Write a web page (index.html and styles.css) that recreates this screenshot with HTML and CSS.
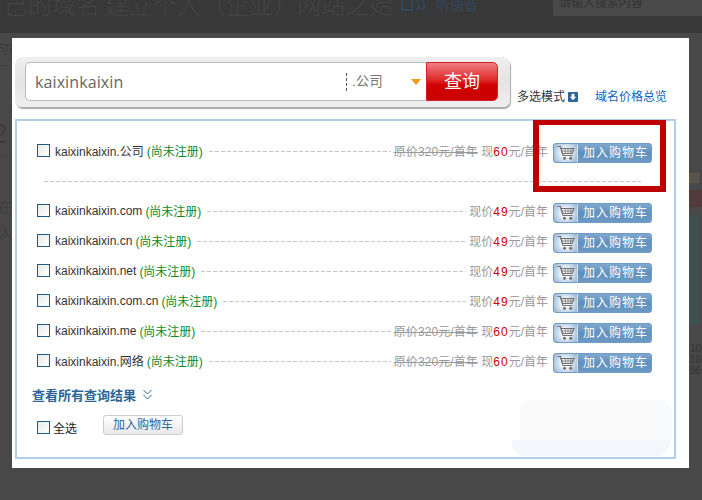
FILE: index.html
```html
<!DOCTYPE html>
<html lang="zh-CN">
<head>
<meta charset="utf-8">
<title>域名查询</title>
<link rel="stylesheet" href="styles.css">
</head>
<body>
<svg class="defs" width="0" height="0" aria-hidden="true">
  <symbol id="cart" viewBox="0 0 18 16">
    <path d="M0.5 1.5H3.5L6 10.5H15.5" fill="none" stroke="currentColor" stroke-width="1.1"/>
    <path d="M4 3.5H17L15 8.5H5.4Z" fill="none" stroke="currentColor" stroke-width="1.1"/>
    <path d="M4.6 6H16M8 3.5 8.5 8.5M11 3.5V8.5M14 3.5 13.5 8.5" fill="none" stroke="currentColor" stroke-width=".8"/>
    <circle cx="7.5" cy="13.3" r="1.5" fill="currentColor"/>
    <circle cx="13.7" cy="13.3" r="1.5" fill="currentColor"/>
  </symbol>
</svg>

<div class="backdrop">
  <div class="bg-band"></div>
  <div class="bg-title">己的域名 建立个人（企业）网站之始</div>
  <svg class="bg-sound" width="28" height="14" viewBox="0 0 28 14"><path d="M1 0v10h10V0M16 0q4 5 0 10M21 0q4 5 0 10" fill="none" stroke="#33475c" stroke-width="2"/></svg>
  <div class="bg-listen">听语音</div>
  <div class="bg-search">请输入搜索内容</div>
  <div class="bg-line bg-line1"></div>
  <div class="bg-line bg-line2"></div>
  <div class="bg-left bg-l1">可能</div>
  <div class="bg-left bg-l2">2</div>
  <div class="bg-left bg-l3">在</div>
  <div class="bg-left bg-l4">入</div>
  <div class="bg-tan"></div>
  <div class="bg-red"></div>
  <div class="bg-teal"></div>
  <div class="bg-num bg-n1">10</div>
  <div class="bg-num bg-n2">10</div>
  <div class="bg-num bg-n3">96</div>
</div>

<div class="modal">
  <div class="top">
    <div class="searchframe">
      <div class="searchinput">
        <span class="query">kaixinkaixin</span>
        <span class="suffix">.公司</span>
        <span class="caret"></span>
      </div>
      <div class="searchbtn">查询</div>
    </div>
    <div class="toplinks">
      <span class="multi">多选模式<span class="downicon"><svg width="10" height="10" viewBox="0 0 11 11"><rect width="11" height="11" rx="1" fill="#2d6599"/><path d="M5.5 9 2 5.3h2V2h3v3.3h2z" fill="#fff"/></svg></span></span>
      <span class="overview">域名价格总览</span>
    </div>
  </div>

  <div class="results">
    <div class="row">
      <div class="info"><span class="check"></span><span class="name">kaixinkaixin.公司</span><span class="status">(尚未注册)</span><span class="leader"></span><span class="price"><s>原价320元/首年</s> 现<b>60</b>元/首年</span></div>
      <div class="cartbtn"><span class="carticon"><svg width="18" height="16"><use href="#cart"/></svg></span><span class="cartlabel">加入购物车</span></div>
    </div>
    <div class="divider"></div>
    <div class="row">
      <div class="info"><span class="check"></span><span class="name">kaixinkaixin.com</span><span class="status">(尚未注册)</span><span class="leader"></span><span class="price">现价<b>49</b>元/首年</span></div>
      <div class="cartbtn"><span class="carticon"><svg width="18" height="16"><use href="#cart"/></svg></span><span class="cartlabel">加入购物车</span></div>
    </div>
    <div class="row">
      <div class="info"><span class="check"></span><span class="name">kaixinkaixin.cn</span><span class="status">(尚未注册)</span><span class="leader"></span><span class="price">现价<b>49</b>元/首年</span></div>
      <div class="cartbtn"><span class="carticon"><svg width="18" height="16"><use href="#cart"/></svg></span><span class="cartlabel">加入购物车</span></div>
    </div>
    <div class="row">
      <div class="info"><span class="check"></span><span class="name">kaixinkaixin.net</span><span class="status">(尚未注册)</span><span class="leader"></span><span class="price">现价<b>49</b>元/首年</span></div>
      <div class="cartbtn"><span class="carticon"><svg width="18" height="16"><use href="#cart"/></svg></span><span class="cartlabel">加入购物车</span></div>
    </div>
    <div class="row">
      <div class="info"><span class="check"></span><span class="name">kaixinkaixin.com.cn</span><span class="status">(尚未注册)</span><span class="leader"></span><span class="price">现价<b>49</b>元/首年</span></div>
      <div class="cartbtn"><span class="carticon"><svg width="18" height="16"><use href="#cart"/></svg></span><span class="cartlabel">加入购物车</span></div>
    </div>
    <div class="row">
      <div class="info"><span class="check"></span><span class="name">kaixinkaixin.me</span><span class="status">(尚未注册)</span><span class="leader"></span><span class="price"><s>原价320元/首年</s> 现<b>60</b>元/首年</span></div>
      <div class="cartbtn"><span class="carticon"><svg width="18" height="16"><use href="#cart"/></svg></span><span class="cartlabel">加入购物车</span></div>
    </div>
    <div class="row">
      <div class="info"><span class="check"></span><span class="name">kaixinkaixin.网络</span><span class="status">(尚未注册)</span><span class="leader"></span><span class="price"><s>原价320元/首年</s> 现<b>60</b>元/首年</span></div>
      <div class="cartbtn"><span class="carticon"><svg width="18" height="16"><use href="#cart"/></svg></span><span class="cartlabel">加入购物车</span></div>
    </div>

    <div class="viewall">查看所有查询结果<svg class="chev" width="9" height="11" viewBox="0 0 9 11"><path d="M.5 1 4.5 5l4-4M.5 6l4 4 4-4" fill="none" stroke="#2d6599"/></svg></div>
    <div class="selectall">
      <label class="all"><span class="check"></span>全选</label>
      <span class="plainbtn">加入购物车</span>
    </div>
  </div>

  <div class="smudge"><div class="smudge-top"></div><div class="smudge-bottom"></div></div>
  <div class="highlight"></div>
</div>
</body>
</html>
```
FILE: styles.css
```css
html, body {
  margin: 0;
  padding: 0;
  height: 100%;
  overflow: hidden;
  background: #484848;
  font-family: "Liberation Sans", "Noto Sans CJK SC", sans-serif;
  font-size: 12px;
}
.defs { position: absolute; }

/* dimmed page behind the dialog */
.backdrop { position: absolute; inset: 0; overflow: hidden; }
.bg-band { position: absolute; left: 0; right: 0; top: 0; height: 33px; background: #383838; }
.bg-title { position: absolute; left: 4px; top: -11px; font-size: 24px; line-height: 30px; color: #444; white-space: nowrap; font-family: "Noto Sans CJK SC", sans-serif; font-weight: 300; }
.bg-sound { position: absolute; left: 401px; top: 0; }
.bg-listen { position: absolute; left: 436px; top: -5px; font-size: 14px; line-height: 20px; color: #33475c; }
.bg-search { position: absolute; left: 553px; top: 0; width: 149px; height: 16px; background: #4a4a4a; color: #333; font-size: 12px; line-height: 6px; padding-left: 6px; box-sizing: border-box; overflow: hidden; }
.bg-line { position: absolute; left: 0; width: 12px; height: 1px; background: #404040; }
.bg-line1 { top: 65px; }
.bg-line2 { top: 155px; }
.bg-left { position: absolute; left: 0; color: #3c3c3c; white-space: nowrap; }
.bg-l1 { top: 40px; font-size: 12px; margin-left: -3px; }
.bg-l2 { top: 118px; font-size: 28px; margin-left: -8px; }
.bg-l3 { top: 196px; font-size: 14px; margin-left: -2px; }
.bg-l4 { top: 222px; font-size: 14px; margin-left: -2px; }
.bg-tan { position: absolute; left: 689px; top: 173px; width: 8px; height: 8px; border: 1px solid #5f5a48; background: #55534a; }
.bg-red { position: absolute; left: 689px; right: 0; top: 190px; height: 17px; background: #533a3b; }
.bg-teal { position: absolute; left: 689px; width: 10px; top: 215px; height: 110px; background: #3f5250; }
.bg-num { position: absolute; left: 690px; font-size: 10px; color: #353535; }
.bg-n1 { top: 343px; }
.bg-n2 { top: 354px; }
.bg-n3 { top: 365px; }

/* dialog */
.modal {
  position: absolute;
  left: 12px;
  top: 38px;
  width: 677px;
  height: 430px;
  background: #fff;
  box-sizing: border-box;
  padding: 19px 0 0 3px;
}
.top { display: flex; align-items: flex-end; }
.searchframe {
  box-sizing: border-box;
  width: 495px;
  height: 50px;
  padding: 5px 12px 0 10px;
  display: flex;
  align-items: flex-start;
  border-radius: 7px;
  background: linear-gradient(#efefef, #e4e4e4 50%, #efefef);
  box-shadow: 1px 2px 1px #aaa;
}
.searchinput {
  flex: 1;
  height: 39px;
  box-sizing: border-box;
  border: 1px solid #bbb;
  border-right: 0;
  border-radius: 5px 0 0 5px;
  background: #fff;
  display: flex;
  align-items: center;
  padding-left: 9px;
}
.query { font-family: "Open Sans", sans-serif; font-size: 16px; letter-spacing: .1px; color: #666; flex: 1; }
.suffix { font-size: 13.5px; color: #777; width: 65px; padding-left: 5px; box-sizing: border-box; border-left: 1px dashed #555; line-height: 18px; white-space: nowrap; }
.caret { width: 0; height: 0; border: 5px solid transparent; border-top: 6px solid #f39a1c; border-bottom: 0; margin: 1px 5px 0 0; }
.searchbtn {
  width: 72px;
  height: 39px;
  box-sizing: border-box;
  border: 1px solid #d8202a;
  border-radius: 0 5px 5px 0;
  background: linear-gradient(#ee7f80, #e02a2d 45%, #cf0000 60%, #cc0000);
  color: #fff;
  font-size: 18px;
  line-height: 35px;
  text-align: center;
  font-family: "Noto Sans CJK SC", sans-serif;
}
.toplinks { display: flex; margin-left: 7px; line-height: 18px; margin-bottom: 1px; }
.multi { color: #333; display: flex; align-items: center; gap: 3px; width: 78px; }
.downicon { display: flex; }
.overview { color: #0a64c8; white-space: nowrap; }

.results {
  margin-top: 12px;
  box-sizing: border-box;
  width: 661px;
  height: 340px;
  border: 2px solid #b0cfec;
  padding: 17px 22px 0 20px;
}
.row { display: flex; align-items: center; height: 30px; }
.info { flex: 1; display: flex; align-items: center; padding-bottom: 5px; padding-right: 5px; min-width: 0; }
.check {
  flex: none;
  box-sizing: border-box;
  width: 13px;
  height: 13px;
  border: 1px solid #1c5a8c;
  background: linear-gradient(135deg, #e8ebe6, #fff);
}
.name { margin-left: 5px; color: #333; white-space: nowrap; }
.status { color: #0a8a2a; margin-left: 3px; white-space: nowrap; }
.leader {
  flex: 1;
  height: 1px;
  background: repeating-linear-gradient(90deg, #c6c6c6 0 4px, transparent 4px 6px);
  margin: 2px 3px 0 6px;
}
.price { color: #999; white-space: nowrap; }
.price s { color: #999; letter-spacing: .1px; }
.price b { color: #c00; font-weight: 400; letter-spacing: 1px; }
.cartbtn {
  flex: none;
  box-sizing: border-box;
  width: 99px;
  height: 20px;
  display: flex;
  border: 1px solid #6f9bc4;
  border-radius: 3px;
  background: linear-gradient(#7fa8cf, #5f90bd 50%, #6d9ac5);
  color: #fff;
}
.carticon {
  width: 23px;
  display: flex;
  align-items: center;
  justify-content: center;
  color: #707070;
  background: radial-gradient(circle at 50% 50%, #fff 20%, #9dbcda 90%);
  border-right: 1px solid #cfe0ee;
  border-radius: 2px 0 0 2px;
}
.cartlabel { flex: 1; text-align: center; letter-spacing: 1px; line-height: 18px; padding-left: 2px; white-space: nowrap; }
.divider {
  height: 1px;
  background: repeating-linear-gradient(90deg, #c6c6c6 0 4px, transparent 4px 6px);
  margin: 13px 11px 16px 7px;
}
.viewall {
  margin: 6px 0 0 -5px;
  height: 20px;
  display: flex;
  align-items: center;
  color: #2d6599;
  font-size: 13px;
  font-weight: 700;
  font-family: "Noto Sans CJK SC", sans-serif;
}
.chev { margin-left: 7px; }
.selectall { display: flex; align-items: flex-start; margin-top: 11px; }
.all { display: flex; align-items: center; gap: 3px; color: #222; margin-top: 3px; height: 18px; }
.plainbtn {
  box-sizing: border-box;
  margin-left: 26px;
  width: 80px;
  height: 20px;
  line-height: 18px;
  text-align: center;
  color: #2d6599;
  border: 1px solid #ccc;
  border-radius: 3px;
  background: linear-gradient(#fff, #e9e9e9);
}

/* scribble and annotation laid over the screenshot */
.smudge { position: absolute; left: 500px; top: 362px; width: 158px; height: 56px; }
.smudge-top { height: 40px; margin: 0 -2px 0 8px; background: linear-gradient(90deg, #fbfafa 90%, #f8fbfe 90%); border-radius: 8px 12px 0 0; }
.smudge-bottom { height: 16px; background: #f3f6fa; border-radius: 0 0 14px 14px; }
.highlight {
  position: absolute;
  left: 521px;
  top: 82px;
  width: 133px;
  height: 72px;
  box-sizing: border-box;
  border: 6px solid #bf0000;
  border-top-width: 5px;
}
```
